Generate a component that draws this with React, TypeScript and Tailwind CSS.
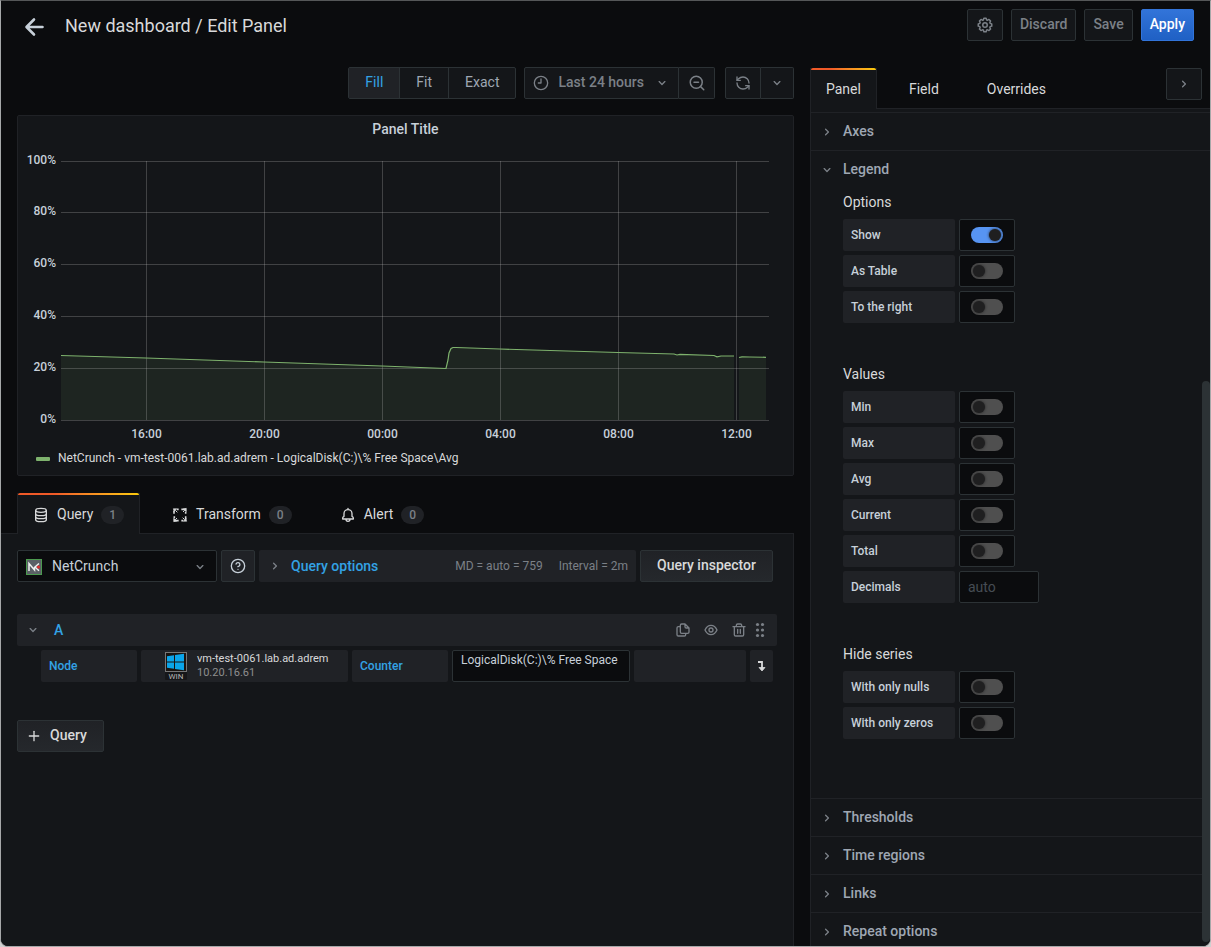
import type { ReactNode } from 'react';
import { CircleHelp, Clock9, Plus, RefreshCcw, ZoomOut } from 'lucide-react';

interface IconProps {
  className?: string;
}

function AngleRight({ className = '' }: IconProps) {
  return (
    <svg viewBox="0 0 24 24" fill="currentColor" aria-hidden="true" className={`w-4 h-4 shrink-0 ${className}`}>
      <path d="M14.83,11.29,10.59,7.05a1,1,0,0,0-1.42,0,1,1,0,0,0,0,1.41L12.71,12,9.17,15.54a1,1,0,0,0,0,1.41,1,1,0,0,0,.71.29,1,1,0,0,0,.71-.29l4.24-4.24A1,1,0,0,0,14.83,11.29Z" />
    </svg>
  );
}

function AngleDown({ className = '' }: IconProps) {
  return (
    <svg viewBox="0 0 24 24" fill="currentColor" aria-hidden="true" className={`w-4 h-4 shrink-0 ${className}`}>
      <path d="M17,9.17a1,1,0,0,0-1.41,0L12,12.71,8.46,9.17a1,1,0,0,0-1.41,0,1,1,0,0,0,0,1.42l4.24,4.24a1,1,0,0,0,1.42,0L17,10.59A1,1,0,0,0,17,9.17Z" />
    </svg>
  );
}

function ArrowLeft() {
  return (
    <svg viewBox="0 0 24 24" fill="none" stroke="currentColor" strokeWidth="2.6" strokeLinecap="round" strokeLinejoin="round" aria-hidden="true" className="w-6 h-6">
      <path d="M19.500 12H4.500M11 4.500 3.500 12l7.500 7.500" />
    </svg>
  );
}

function CogIcon() {
  return (
    <svg viewBox="0 0 24 24" fill="currentColor" aria-hidden="true" className="w-[18px] h-[18px]">
      <path d="M21.32,9.55l-1.89-.63.89-1.78A1,1,0,0,0,20.13,6L18,3.87a1,1,0,0,0-1.15-.19l-1.78.89-.63-1.89A1,1,0,0,0,13.5,2h-3a1,1,0,0,0-.95.68L8.92,4.57,7.14,3.68A1,1,0,0,0,6,3.87L3.87,6a1,1,0,0,0-.19,1.15l.89,1.78-1.89.63A1,1,0,0,0,2,10.5v3a1,1,0,0,0,.68.95l1.89.63-.89,1.78A1,1,0,0,0,3.87,18L6,20.13a1,1,0,0,0,1.15.19l1.78-.89.63,1.89a1,1,0,0,0,.95.68h3a1,1,0,0,0,.95-.68l.63-1.89,1.78.89A1,1,0,0,0,18,20.13L20.13,18a1,1,0,0,0,.19-1.15l-.89-1.78,1.89-.63A1,1,0,0,0,22,13.5v-3A1,1,0,0,0,21.32,9.55ZM20,12.78l-1.2.4A2,2,0,0,0,17.64,16l.57,1.14-1.1,1.1L16,17.64a2,2,0,0,0-2.79,1.16l-.4,1.2H11.22l-.4-1.2A2,2,0,0,0,8,17.64l-1.14.57-1.1-1.1L6.36,16A2,2,0,0,0,5.2,13.18L4,12.78V11.22l1.2-.4A2,2,0,0,0,6.36,8L5.79,6.89l1.1-1.1L8,6.36A2,2,0,0,0,10.82,5.2l.4-1.2h1.56l.4,1.2A2,2,0,0,0,16,6.36l1.14-.57,1.1,1.1L17.64,8a2,2,0,0,0,1.16,2.79l1.2.4ZM12,8a4,4,0,1,0,4,4A4,4,0,0,0,12,8Zm0,6a2,2,0,1,1,2-2A2,2,0,0,1,12,14Z" />
    </svg>
  );
}

function DatabaseIcon() {
  return (
    <svg viewBox="0 0 24 24" fill="none" stroke="currentColor" strokeWidth="2" aria-hidden="true" className="w-4 h-4">
      <ellipse cx="12" cy="5" rx="8" ry="3" />
      <path d="M4 5v14c0 1.7 3.6 3 8 3s8-1.3 8-3v-14M4 10c0 1.7 3.6 3 8 3s8-1.3 8-3M4 14.5c0 1.7 3.6 3 8 3s8-1.3 8-3" />
    </svg>
  );
}

function TransformIcon() {
  return (
    <svg viewBox="0 0 24 24" fill="none" stroke="currentColor" strokeWidth="2.4" aria-hidden="true" className="w-4 h-4">
      <path d="M3 10V6M7 3.500h3M14 3.500h7M20.500 7v3M20.500 14v4M17 20.500h-3M10 20.500H3M3.500 17v-3" />
      <path d="M2 2.500h5L3 7ZM21.500 2v5L16.500 3ZM22 21.500h-5l4-4.500ZM2.500 22v-5l5 4Z" fill="currentColor" strokeWidth="0.8" />
      <path d="m5 5 3 3M19 19l-3-3M19 5l-2.500 2.500M5 19l2.500-2.500" strokeWidth="1.500" />
    </svg>
  );
}

function BellIcon() {
  return (
    <svg viewBox="0 0 24 24" fill="none" stroke="currentColor" strokeWidth="2" strokeLinejoin="round" strokeLinecap="round" aria-hidden="true" className="w-4 h-4">
      <path d="M12 2v2M6 14v-4a6 6 0 0 1 12 0v4c1.300.5 2 1.500 2 2.500V18H4v-1.500c0-1 .7-2 2-2.500ZM9 18.500a3 3 0 0 0 6 0" />
    </svg>
  );
}

function CopyIcon() {
  return (
    <svg viewBox="0 0 24 24" fill="none" stroke="currentColor" strokeWidth="2" strokeLinejoin="round" strokeLinecap="round" aria-hidden="true" className="w-4 h-4">
      <path d="M8 5a2 2 0 0 1 2-2h5l6 6v6a2 2 0 0 1-2 2h-9a2 2 0 0 1-2-2ZM15 3v4a2 2 0 0 0 2 2h4M8 7H5a2 2 0 0 0-2 2v10a2 2 0 0 0 2 2h9a2 2 0 0 0 2-2v-2" />
    </svg>
  );
}

function EyeIcon() {
  return (
    <svg viewBox="0 0 24 24" fill="none" stroke="currentColor" strokeWidth="2" strokeLinejoin="round" aria-hidden="true" className="w-4 h-4">
      <path d="M3 12c2-4.500 5.500-7 9-7s7 2.500 9 7c-2 4.500-5.500 7-9 7s-7-2.500-9-7Z" />
      <circle cx="12" cy="12" r="3" />
    </svg>
  );
}

function TrashIcon() {
  return (
    <svg viewBox="0 0 24 24" fill="none" stroke="currentColor" strokeWidth="2" strokeLinejoin="round" strokeLinecap="round" aria-hidden="true" className="w-4 h-4">
      <path d="M3 7h18M8 7V5a2 2 0 0 1 2-2h4a2 2 0 0 1 2 2v2M5 7v12a2 2 0 0 0 2 2h10a2 2 0 0 0 2-2V7M10 11v6M14 11v6" />
    </svg>
  );
}

function GripIcon() {
  return (
    <svg viewBox="0 0 16 16" fill="currentColor" aria-hidden="true" className="w-4 h-4">
      {[2.5, 8, 13.5].map((cy) => (
        <g key={cy}>
          <circle cx="5.500" cy={cy} r="1.600" />
          <circle cx="10.500" cy={cy} r="1.600" />
        </g>
      ))}
    </svg>
  );
}

function NetCrunchLogo() {
  return (
    <svg viewBox="0 0 16 16" aria-hidden="true" className="w-4 h-4">
      <rect x="0.5" y="0.5" width="15" height="15" fill="#5b6066" stroke="#4c9a4f" />
      <path d="M3 12V4.500L8.500 11V8" fill="none" stroke="#f1f1f1" strokeWidth="1.500" />
      <path d="M13 4.500 9 8l4 3.700" fill="none" stroke="#f1f1f1" strokeWidth="1.500" />
      <circle cx="12.500" cy="8" r="1.600" fill="#e02f2f" />
    </svg>
  );
}

function WindowsNodeIcon() {
  return (
    <svg viewBox="0 0 22 28" aria-hidden="true" className="w-[22px] h-7 shrink-0">
      <rect x="0" y="0" width="22" height="28" rx="1" fill="#161719" />
      <rect x="0.5" y="0.5" width="21" height="19" fill="#1a1511" stroke="#777777" />
      <path d="M2 4.200 9 3.200V9.500H2ZM10 3 19 1.800V9.500H10ZM2 10.500H9V16.800L2 15.800ZM10 10.500H19V18.200L10 17Z" fill="#0aa5ea" />
      <text x="11" y="27" textAnchor="middle" fontSize="8" fontWeight="400" fill="#b5b5b5" className="font-['Roboto',sans-serif]">WIN</text>
    </svg>
  );
}

const sizeModes = ['Fill', 'Fit', 'Exact'];

function Toolbar() {
  const box = 'h-8 flex items-center justify-center border border-[#2c3235] bg-[#141619] text-[#7b8087]';
  return (
    <div className="flex justify-end">
      <div role="radiogroup" aria-label="Panel size" className="flex h-8 mr-2 rounded-xs border border-[#2c3235] bg-[#141619] text-sm">
        {sizeModes.map((mode) => (
          <label
            key={mode}
            className="flex items-center px-4 pb-0.5 text-[#9fa7b3] border-r border-[#2c3235] last:border-r-0 has-checked:bg-[#202226] has-checked:text-[#33a2e5]"
          >
            <input type="radio" name="size-mode" defaultChecked={mode === 'Fill'} className="sr-only" />
            {mode}
          </label>
        ))}
      </div>
      <button type="button" className={`${box} rounded-l-xs px-2 text-sm font-medium`}>
        <Clock9 className="w-4 h-4 mr-[9px]" />
        <span className="pb-0.5">Last 24 hours</span>
        <AngleDown className="ml-2.5" />
      </button>
      <button type="button" aria-label="Zoom out" className={`${box} rounded-r-xs border-l-0 w-9 mr-2.5`}>
        <ZoomOut className="w-[18px] h-[18px]" />
      </button>
      <button type="button" aria-label="Refresh" className={`${box} rounded-l-xs w-9`}>
        <RefreshCcw className="w-4 h-4" />
      </button>
      <button type="button" aria-label="Refresh interval" className={`${box} rounded-r-xs border-l-0 w-[33px]`}>
        <AngleDown />
      </button>
    </div>
  );
}

const yTicks = [
  { label: '100%', y: 17.5 },
  { label: '80%', y: 68.5 },
  { label: '60%', y: 120.5 },
  { label: '40%', y: 172.5 },
  { label: '20%', y: 224.5 },
  { label: '0%', y: 276.5 },
];

const xTicks = [
  { label: '16:00', x: 128.5 },
  { label: '20:00', x: 246.5 },
  { label: '00:00', x: 364.5 },
  { label: '04:00', x: 482.5 },
  { label: '08:00', x: 600.5 },
  { label: '12:00', x: 718.5 },
];

const seriesA =
  '43,211.5 128,214 246,218 364,222 428,224.5 430,216 431,209 433,204.5 435,203.5 438,203.5 482,205 600,208.5 656,210 659,211 662,210.3 696,211.5 699,212.8 703,212 716,212';
const seriesB = '721,213.5 724,212.8 732,213 748,213.3';

function PanelPreview() {
  return (
    <section className="rounded-xs border border-[#202226] bg-[#141619]">
      <h2 className="h-7 flex items-center justify-center pb-0.5 text-sm font-medium text-[#c7d0d9]">Panel Title</h2>
      <svg viewBox="0 0 775 300" className="block w-full h-auto font-['Roboto',sans-serif]" role="img" aria-label="Free space over time">
        <polygon points={`43,276 ${seriesA} 716,276`} fill="#7eb26d" fillOpacity="0.1" />
        <polygon points={`721,276 ${seriesB} 748,276`} fill="#7eb26d" fillOpacity="0.1" />
        {yTicks.map((t) => (
          <g key={t.label}>
            <line x1="43" x2="751" y1={t.y} y2={t.y} stroke="#c8c8c8" strokeOpacity="0.25" />
            <text x="38" y={t.y + 2.5} textAnchor="end" fontSize="12" fontWeight="500" fill="#c7d0d9">
              {t.label}
            </text>
          </g>
        ))}
        {xTicks.map((t) => (
          <g key={t.label}>
            <line x1={t.x} x2={t.x} y1="17" y2="276" stroke="#c8c8c8" strokeOpacity="0.25" />
            <text x={t.x} y="294" textAnchor="middle" fontSize="12" fontWeight="500" fill="#c7d0d9">
              {t.label}
            </text>
          </g>
        ))}
        <polyline points={seriesA} fill="none" stroke="#7eb26d" strokeWidth="1.2" />
        <polyline points={seriesB} fill="none" stroke="#7eb26d" strokeWidth="1.2" />
      </svg>
      <div className="flex items-center h-[31px] pl-[18px] pb-1 text-xs text-[#d8d9da]">
        <span className="w-3.5 h-1 mr-2 mt-0.5 rounded-[1px] bg-[#7eb26d]" />
        NetCrunch - vm-test-0061.lab.ad.adrem - LogicalDisk(C:)\% Free Space\Avg
      </div>
    </section>
  );
}

interface QueryTabProps {
  icon: ReactNode;
  label: string;
  count: number;
  active?: boolean;
}

function QueryTab({ icon, label, count, active = false }: QueryTabProps) {
  return (
    <button
      type="button"
      role="tab"
      aria-selected={active}
      className={`relative flex items-center h-[41px] mr-4 px-[15px] border-x text-sm text-[#d8d9da] ${
        active ? 'bg-[#141619] border-[#202226]' : 'border-transparent'
      }`}
    >
      {active && <span className="absolute inset-x-0 top-0 h-0.5 rounded-t-sm bg-linear-to-r from-[#f05a28] from-30% to-[#fbca0a]" />}
      <span className="mr-2 mt-0.5">{icon}</span>
      {label}
      <span className="ml-2 mt-0.5 h-[18px] px-2 rounded-full bg-[#202226] text-[#7b8087] text-xs leading-[18px] font-medium">{count}</span>
    </button>
  );
}

function QueryEditor() {
  return (
    <>
      <div role="tablist" className="flex pl-4 mt-[17px] shadow-[inset_0_-1px_0_#202226]">
        <QueryTab icon={<DatabaseIcon />} label="Query" count={1} active />
        <QueryTab icon={<TransformIcon />} label="Transform" count={0} />
        <QueryTab icon={<BellIcon />} label="Alert" count={0} />
      </div>
      <div className="flex-1 p-4 bg-[#141619] border-r border-[#202226]">
        <div className="flex gap-1 pr-1">
          <div className="relative w-[200px]">
            <span className="absolute left-[9px] top-[9px]">
              <NetCrunchLogo />
            </span>
            <select
              aria-label="Data source"
              className="appearance-none w-full h-8 pl-[34px] rounded-xs border border-[#2c3235] bg-[#0b0c0e] text-sm text-[#c7d0d9]"
            >
              <option>NetCrunch</option>
            </select>
            <AngleDown className="absolute right-[9px] top-[9px] text-[#7b8087] pointer-events-none" />
          </div>
          <button
            type="button"
            aria-label="Data source help"
            className="w-[34px] h-8 flex items-center justify-center rounded-xs border border-[#2c3235] bg-[#202226] text-[#c7d0d9]"
          >
            <CircleHelp className="w-4 h-4" />
          </button>
          <button type="button" className="flex-1 flex items-center h-8 pl-2 pr-2 rounded-xs bg-[#202226] text-xs text-[#7b8087]">
            <AngleRight />
            <span className="ml-2 text-sm font-medium text-[#33a2e5]">Query options</span>
            <span className="ml-auto">MD = auto = 759</span>
            <span className="ml-4">Interval = 2m</span>
          </button>
          <button
            type="button"
            className="h-8 px-4 pb-0.5 rounded-xs border border-[#2c3235] bg-linear-to-b from-[#202226] to-[#25282c] text-sm font-medium text-[#d8d9da]"
          >
            Query inspector
          </button>
        </div>

        <div className="flex items-center h-8 mt-8 pl-2 pr-[9px] rounded-xs bg-[#202226] text-[#7b8087]">
          <button type="button" className="flex items-center text-sm font-medium text-[#33a2e5]">
            <AngleDown className="mr-[13px] text-[#7b8087]" />A
          </button>
          <div className="flex items-center ml-auto">
            <button type="button" aria-label="Duplicate query" className="mr-3"><CopyIcon /></button>
            <button type="button" aria-label="Hide query" className="mr-3"><EyeIcon /></button>
            <button type="button" aria-label="Remove query" className="mr-[5px]"><TrashIcon /></button>
            <button type="button" aria-label="Drag query"><GripIcon /></button>
          </div>
        </div>

        <div className="flex gap-1 h-8 mt-1 pl-6 pr-1 text-xs">
          <span className="w-24 flex items-center px-2 rounded-xs bg-[#202226] font-medium text-[#33a2e5]">Node</span>
          <button type="button" className="w-[207px] flex items-center pl-6 rounded-xs bg-[#202226] text-left font-medium text-[#d8d9da]">
            <WindowsNodeIcon />
            <span className="ml-2.5 text-[11px] leading-[14px] font-normal">
              vm-test-0061.lab.ad.adrem
              <span className="block text-[#8e8e8e]">10.20.16.61</span>
            </span>
          </button>
          <label htmlFor="counter" className="w-24 flex items-center px-2 rounded-xs bg-[#202226] font-medium text-[#33a2e5]">
            Counter
          </label>
          <input
            id="counter"
            defaultValue="LogicalDisk(C:)\% Free Space"
            className="w-[178px] px-2 pb-3 rounded-xs border border-[#2c3235] bg-[#0b0c0e] text-[#c7d0d9]"
          />
          <span className="flex-1 rounded-xs bg-[#202226]" />
          <button type="button" aria-label="More options" className="w-[23px] flex items-center justify-center rounded-xs bg-[#202226] text-[#d8d9da]">
            <svg viewBox="0 0 10 12" fill="none" stroke="currentColor" strokeWidth="1.8" className="w-2.5 h-3" aria-hidden="true">
              <path d="M1 2h4v6.500" />
              <path d="M2 7.500h6L5 11Z" fill="currentColor" strokeWidth="0.8" />
            </svg>
          </button>
        </div>

        <button
          type="button"
          className="flex items-center h-8 mt-[38px] pl-2 pr-4 rounded-xs border border-[#2c3235] bg-linear-to-b from-[#202226] to-[#25282c] text-sm font-medium text-[#d8d9da]"
        >
          <Plus className="w-4 h-4 mr-2" />
          <span className="pb-0.5">Query</span>
        </button>
      </div>
    </>
  );
}

function SwitchRow({ label, on = false }: { label: string; on?: boolean }) {
  return (
    <label className="flex gap-1 h-8 text-xs font-medium text-[#c7d0d9]">
      <span className="w-28 flex items-center px-2 rounded-xs bg-[#202226]">{label}</span>
      <span className="w-14 flex items-center justify-center rounded-xs border border-[#2c3235] bg-[#0b0c0e]">
        <input
          type="checkbox"
          defaultChecked={on}
          className="appearance-none w-8 h-4 flex items-center px-0.5 rounded-full bg-[#4f4f4f] checked:bg-[#5794f2] checked:justify-end before:block before:w-3 before:h-3 before:rounded-full before:bg-[#1f1f20] before:shadow-[0_0_3px_#1f1f20]"
        />
      </span>
    </label>
  );
}

function OptionGroup({ title, children }: { title: string; children: ReactNode }) {
  return (
    <div className="mb-[41px]">
      <h3 className="mb-[7px] text-sm leading-5 text-[#d8d9da]">{title}</h3>
      <div className="flex flex-col gap-1">{children}</div>
    </div>
  );
}

function Section({ title, children }: { title: string; children?: ReactNode }) {
  return (
    <div className="border-t border-[#202226]">
      <button type="button" aria-expanded={!!children} className="flex items-center w-full h-[37px] pl-2 text-sm font-medium text-[#9fa7b3]">
        {children ? <AngleDown className="mr-2 text-[#7b8087]" /> : <AngleRight className="mr-2 text-[#7b8087]" />}
        <span className="pb-0.5">{title}</span>
      </button>
      {children && <div className="pt-1 pl-8 pb-[18px]">{children}</div>}
    </div>
  );
}

function OptionsPane() {
  return (
    <aside className="w-[400px] shrink-0 flex flex-col min-h-0">
      <div role="tablist" className="flex items-start h-[41px] shrink-0 pr-2 text-sm text-[#d8d9da] shadow-[inset_0_-1px_0_#202226]">
        <button
          type="button"
          role="tab"
          aria-selected="true"
          className="relative h-[41px] mr-4 px-[15px] border-x border-[#202226] bg-[#141619]"
        >
          <span className="absolute inset-x-0 top-0 h-0.5 rounded-t-sm bg-linear-to-r from-[#f05a28] from-30% to-[#fbca0a]" />
          Panel
        </button>
        <button type="button" role="tab" className="h-[41px] mr-4 px-4">Field</button>
        <button type="button" role="tab" className="h-[41px] px-4">Overrides</button>
        <button
          type="button"
          aria-label="Hide options"
          className="ml-auto w-9 h-8 flex items-center justify-center rounded-xs border border-[#2c3235] bg-[#141619] text-[#7b8087]"
        >
          <AngleRight />
        </button>
      </div>
      <div className="relative flex-1 min-h-0 overflow-hidden pt-[3px] border-l border-[#202226] bg-[#141619]">
        <Section title="Axes" />
        <Section title="Legend">
          <OptionGroup title="Options">
            <SwitchRow label="Show" on />
            <SwitchRow label="As Table" />
            <SwitchRow label="To the right" />
          </OptionGroup>
          <OptionGroup title="Values">
            <SwitchRow label="Min" />
            <SwitchRow label="Max" />
            <SwitchRow label="Avg" />
            <SwitchRow label="Current" />
            <SwitchRow label="Total" />
            <label className="flex gap-1 h-8 text-xs font-medium text-[#c7d0d9]">
              <span className="w-28 flex items-center px-2 rounded-xs bg-[#202226]">Decimals</span>
              <input
                placeholder="auto"
                className="w-20 px-2 rounded-xs border border-[#2c3235] bg-[#0b0c0e] text-sm font-normal placeholder:text-[#464c54]"
              />
            </label>
          </OptionGroup>
          <OptionGroup title="Hide series">
            <SwitchRow label="With only nulls" />
            <SwitchRow label="With only zeros" />
          </OptionGroup>
        </Section>
        <Section title="Thresholds" />
        <Section title="Time regions" />
        <Section title="Links" />
        <Section title="Repeat options" />
        {/* scrollbar thumb */}
        <div className="absolute right-0 bottom-1 w-2 h-[67%] rounded-sm bg-[#2c3235]" />
      </div>
    </aside>
  );
}

export default function App() {
  const secondary = 'h-8 px-2 pb-0.5 rounded-xs border border-[#2c3235] bg-[#141619] text-[#7b8087]';
  return (
    <div className="h-screen bg-[#d0d0d0] font-['Roboto',sans-serif]">
      <div className="h-full flex flex-col overflow-hidden rounded-b-lg border border-[#a6a8a9] border-t-[#555758] bg-[#0b0c0e]">
        <header className="flex items-center h-[50px] shrink-0 pl-[22px] pr-4">
          <a href="#" aria-label="Back" className="mr-[18px] mt-0.5 text-[#c7d0d9]">
            <ArrowLeft />
          </a>
          <h1 className="text-lg text-[#d8d9da]">New dashboard / Edit Panel</h1>
          <div className="flex gap-2 ml-auto mb-0.5 text-sm font-medium">
            <button type="button" aria-label="Dashboard settings" className="w-9 h-8 flex items-center justify-center rounded-xs border border-[#2c3235] bg-[#141619] text-[#7b8087]">
              <CogIcon />
            </button>
            <button type="button" className={secondary}>Discard</button>
            <button type="button" className={secondary}>Save</button>
            <button type="button" className="h-8 px-2 pb-0.5 rounded-xs border border-[#3274d9] bg-linear-to-b from-[#3274d9] to-[#1f60c4] text-white">
              Apply
            </button>
          </div>
        </header>
        <div className="flex-1 min-h-0 flex gap-4">
          <main className="flex-1 min-w-0 flex flex-col pt-4">
            <div className="pl-4 flex flex-col gap-4">
              <Toolbar />
              <PanelPreview />
            </div>
            <QueryEditor />
          </main>
          <div className="flex pt-[17px] min-h-0">
            <OptionsPane />
          </div>
        </div>
      </div>
    </div>
  );
}
